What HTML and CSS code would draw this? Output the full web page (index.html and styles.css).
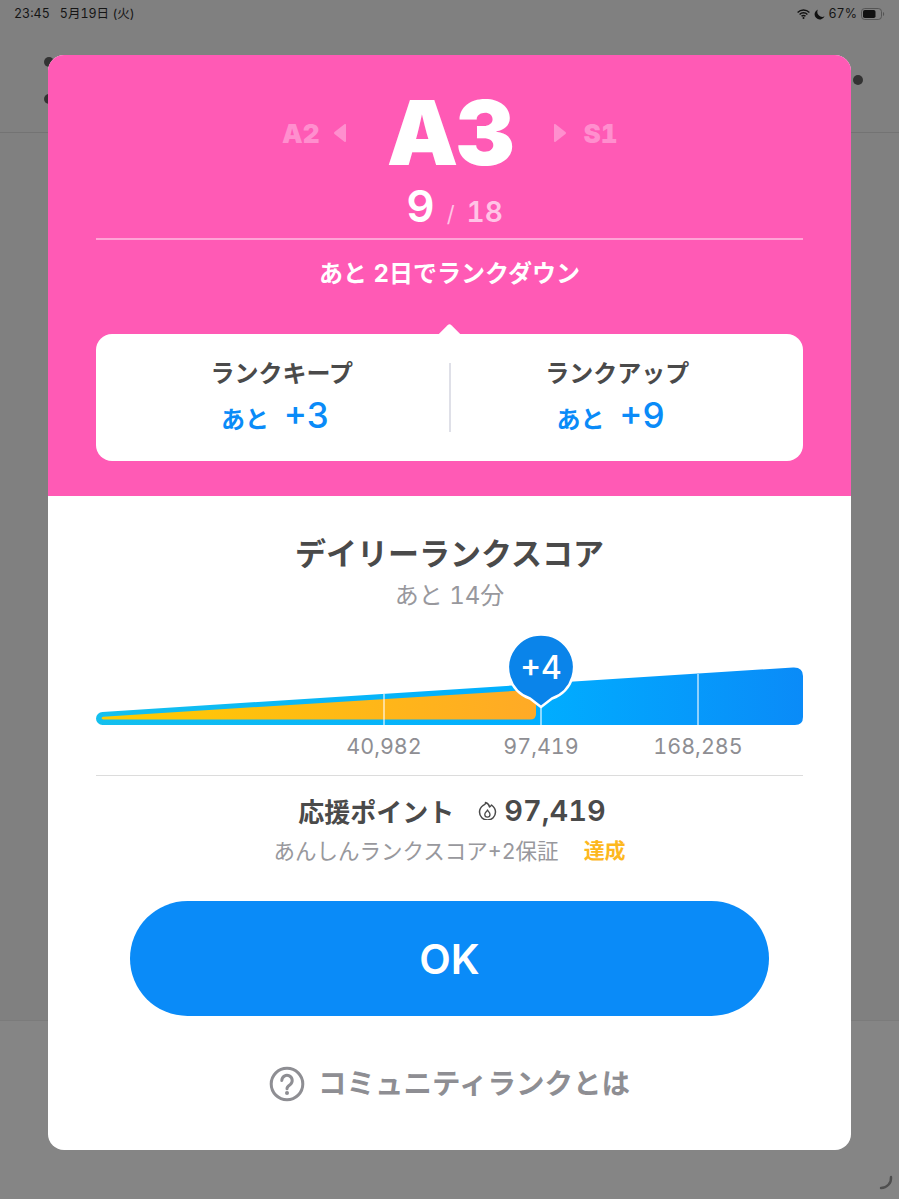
FILE: index.html
```html
<!DOCTYPE html>
<html lang="ja">
<head>
  <meta charset="UTF-8">
  <title>コミュニティランク</title>
  <link rel="stylesheet" href="styles.css">
</head>
<body>

<div id="statusBar">
  <div class="status-left"><span>23:45</span><span>5月19日 (火)</span></div>
  <div class="status-right">
    <svg width="13" height="10" viewBox="0 0 13 10">
      <path d="M0.6 3.4a8.4 8.4 0 0 1 11.8 0M2.6 5.4a5.5 5.5 0 0 1 7.8 0M4.5 7.3a2.8 2.8 0 0 1 4 0" fill="none" stroke="#111" stroke-width="1.4"/>
      <circle cx="6.5" cy="8.9" r="1" fill="#111"/>
    </svg>
    <svg width="11" height="11" viewBox="0 0 11 11">
      <path d="M4 0.4a5.2 5.2 0 1 0 6.6 6.9A5 5 0 0 1 4 0.4z" fill="#111"/>
    </svg>
    <span>67%</span>
    <svg width="24" height="12" viewBox="0 0 24 12">
      <rect x="0.5" y="0.5" width="20" height="11" rx="3.2" fill="none" stroke="#555"/>
      <rect x="2" y="2" width="12.5" height="8" rx="1.8" fill="#111"/>
      <path d="M22 4v4a2 2 0 0 0 1.2-2A2 2 0 0 0 22 4z" fill="#555"/>
    </svg>
  </div>
</div>

<div id="backHeader">
  <div class="back-dots"><i class="dot"></i><i class="dot"></i></div>
  <i class="dot"></i>
</div>
<div id="backFooter"></div>
<svg class="spinner" width="18" height="18" viewBox="0 0 18 18">
  <path d="M14 2a10 10 0 0 1-10 11" fill="none" stroke="#4f4f4f" stroke-width="2.4" stroke-linecap="round"/>
</svg>

<div id="modal">
  <section class="rank-top">
    <div class="rank-row">
      <div class="rank-side side-prev">
        <span>A2</span>
        <svg width="14" height="20" viewBox="0 0 14 20"><path d="M13 2v16a1 1 0 0 1-1.6.8L1.500 11a1.300 1.300 0 0 1 0-2l9.900-7.800A1 1 0 0 1 13 2z"/></svg>
      </div>
      <div class="rank-name">A3</div>
      <div class="rank-side side-next">
        <svg width="14" height="20" viewBox="0 0 14 20"><path d="M1 2v16a1 1 0 0 0 1.600.8L12.500 11a1.300 1.300 0 0 0 0-2L2.600 1.200A1 1 0 0 0 1 2z"/></svg>
        <span>S1</span>
      </div>
    </div>
    <div class="rank-count"><b>9</b><em>/</em><span>18</span></div>
    <div class="rank-notice">あと 2日でランクダウン</div>
    <div class="rank-card">
      <div class="rank-goal">
        <h3>ランクキープ</h3>
        <p>あと<b>+3</b></p>
      </div>
      <div class="rank-goal">
        <h3>ランクアップ</h3>
        <p>あと<b>+9</b></p>
      </div>
    </div>
  </section>

  <section class="score">
    <h2>デイリーランクスコア</h2>
    <p class="score-left">あと 14分</p>

    <div class="chart">
      <svg width="707" height="96" viewBox="0 0 707 96">
        <defs>
          <linearGradient id="blueBar" x1="0" x2="1" y1="0" y2="0">
            <stop offset="0" stop-color="#14c0ee"/>
            <stop offset="0.62" stop-color="#00aeff"/>
            <stop offset="1" stop-color="#0a8bf8"/>
          </linearGradient>
          <linearGradient id="orangeBar" x1="0" x2="1" y1="0" y2="0">
            <stop offset="0" stop-color="#ffcc00"/>
            <stop offset="1" stop-color="#ffaa26"/>
          </linearGradient>
        </defs>
        <path d="M6.500 78L697 33.500Q707 33 707 42V83Q707 91 699 91H6.500A6.500 6.500 0 0 1 6.500 78z" fill="url(#blueBar)"/>
        <path d="M7 82.700L430 56.200Q440 56 440 64V80Q440 85.500 434 85.500H7Q4 84 7 82.700z" fill="url(#orangeBar)"/>
        <path d="M288 60V91M445 52V91M602 40V91" stroke="#fff" stroke-opacity="0.55" stroke-width="2"/>
        <path d="M445 73L434 64.500A33 33 0 1 1 456 64.500z" fill="#0a84ea" stroke="#fff" stroke-width="2.500" stroke-linejoin="round"/>
        <text class="chart-pin" x="445" y="45" text-anchor="middle">+4</text>
      </svg>
      <div class="chart-labels">
        <span class="chart-label" style="left: 288px">40,982</span>
        <span class="chart-label" style="left: 445px">97,419</span>
        <span class="chart-label" style="left: 602px">168,285</span>
      </div>
    </div>

    <div class="points">
      <div class="points-main">
        <span>応援ポイント</span>
        <b>
          <svg width="19" height="19" viewBox="0 0 19 19">
            <path d="M7.500 1.500C8 3.500 6.500 4 5 4.500 3 6 1.500 8 1.500 11a8 8 0 0 0 16 0c0-3.500-2-5.500-4-7-.5 1-1 1.500-2 2-.3-2-1.800-3.800-4-4.500z" fill="none" stroke="#4a4a4a" stroke-width="1.500" stroke-linejoin="round"/>
            <path d="M9.500 9c.3 1.200 2.500 2.300 2.500 4.500a2.600 2.600 0 0 1-5.200 0c0-1.500.7-2 1.400-2.700.6-.5 1.100-1 1.300-1.800z" fill="none" stroke="#4a4a4a" stroke-width="1.300" stroke-linejoin="round"/>
          </svg>97,419
        </b>
      </div>
      <div class="points-sub"><span>あんしんランクスコア+2保証</span><b>達成</b></div>
    </div>

    <button class="ok-btn">OK</button>

    <div class="about">
      <svg width="36" height="36" viewBox="0 0 36 36">
        <circle cx="18" cy="18" r="15.800" fill="none" stroke="#8e8e93" stroke-width="3"/>
        <path d="M12.800 14.500a5.200 5.200 0 1 1 8.200 4.300c-1.800 1.200-3 2-3 4" fill="none" stroke="#8e8e93" stroke-width="3" stroke-linecap="round"/>
        <circle cx="18" cy="27" r="2" fill="#8e8e93"/>
      </svg>
      <span>コミュニティランクとは</span>
    </div>
  </section>
</div>

</body>
</html>
```

FILE: styles.css
```css
* {
  box-sizing: border-box;
}
html, body {
  height: 100%;
}
body {
  margin: 0;
  background: #808080;
  color: #4a4a4a;
  font-family: Inter, "Noto Sans CJK JP", sans-serif;
  font-variant-numeric: tabular-nums;
  overflow: hidden;
}

#statusBar {
  height: 28px;
  padding: 0 14px;
  display: flex;
  justify-content: space-between;
  align-items: center;
  font-size: 12.500px;
  line-height: 16px;
  color: #151515;
}
.status-left {
  display: flex;
  gap: 10px;
}
.status-right {
  display: flex;
  align-items: center;
  gap: 4px;
}

#backHeader {
  height: 105px;
  padding: 0 36px 0 44px;
  display: flex;
  justify-content: space-between;
  align-items: center;
  border-bottom: 1px solid #737373;
}
.back-dots {
  display: flex;
  flex-direction: column;
  gap: 27px;
}
.dot {
  display: block;
  width: 10px;
  height: 10px;
  border-radius: 50%;
  background: #333;
}
#backFooter {
  position: absolute;
  left: 0;
  right: 0;
  top: 1020px;
  bottom: 0;
  background: #858585;
  border-top: 1px solid #7b7b7b;
}
.spinner {
  position: absolute;
  right: 4px;
  bottom: 6px;
}

#modal {
  position: absolute;
  left: 48px;
  top: 55px;
  width: 803px;
  height: 1095px;
  border-radius: 16px;
  background: white;
  overflow: hidden;
}

.rank-top {
  height: 441px;
  padding: 32px 48px 0;
  background: #ff5ab5;
}
.rank-row {
  height: 92px;
  display: grid;
  grid-template-columns: 1fr 130px 1fr;
  align-items: center;
  column-gap: 38px;
}
.rank-name {
  text-align: center;
  font-family: Inter, sans-serif;
  font-weight: 900;
  font-size: 90px;
  line-height: 92px;
  letter-spacing: -2px;
  color: white;
}
.rank-side {
  display: flex;
  align-items: center;
  font-family: Inter, sans-serif;
  font-weight: 900;
  font-size: 26px;
  color: #ff8fce;
}
.rank-side svg {
  fill: #ff8fce;
}
.side-prev {
  justify-content: flex-end;
  gap: 13px;
}
.side-next {
  gap: 17px;
}
.rank-count {
  height: 61px;
  padding-left: 10px;
  display: flex;
  justify-content: center;
  align-items: baseline;
  gap: 12px;
  border-bottom: 2px solid rgba(255,255,255,0.45);
  color: #ffc4e6;
  font-size: 28px;
  font-weight: 600;
}
.rank-count b {
  font-size: 44px;
  line-height: 54px;
  font-weight: 600;
  color: white;
}
.rank-count em {
  font-size: 22px;
  font-style: normal;
  font-weight: 400;
}
.rank-notice {
  height: 94px;
  padding-top: 17px;
  text-align: center;
  font-size: 24px;
  line-height: 34px;
  font-weight: 700;
  color: white;
}

.rank-card {
  position: relative;
  height: 127px;
  padding: 0 19px;
  display: flex;
  align-items: center;
  border-radius: 16px;
  background: white;
}
.rank-card::before {
  content: "";
  position: absolute;
  left: 50%;
  top: -8px;
  width: 19px;
  height: 19px;
  margin-left: -9.500px;
  border-radius: 3px;
  background: white;
  transform: rotate(45deg) scale(0.9);
}
.rank-goal {
  flex: 1;
  height: 69px;
  text-align: center;
}
.rank-goal + .rank-goal {
  border-left: 2px solid #dfe0e8;
}
.rank-goal h3 {
  margin: 0;
  height: 32px;
  line-height: 22px;
  font-size: 24px;
  font-weight: 700;
  color: #4a4a4a;
}
.rank-goal p {
  margin: 0;
  padding-right: 13px;
  display: flex;
  justify-content: center;
  align-items: baseline;
  gap: 15px;
  font-size: 24px;
  line-height: 40px;
  font-weight: 700;
  color: #0a8bf8;
}
.rank-goal p b {
  font-size: 35px;
  font-weight: 500;
}

.score {
  padding: 37px 48px 0;
  text-align: center;
}
.score h2 {
  margin: 0;
  font-size: 31px;
  line-height: 42px;
  font-weight: 700;
  color: #4a4a4a;
}
.score-left {
  margin: 6px 0 0;
  font-size: 24px;
  line-height: 30px;
  color: #98989d;
}

.chart {
  margin-top: 23px;
  height: 142px;
  border-bottom: 1px solid #dcdcdc;
}
.chart svg {
  display: block;
}
.chart-pin {
  font-family: Inter, sans-serif;
  font-size: 32px;
  font-weight: 500;
  fill: white;
}
.chart-labels {
  position: relative;
  height: 30px;
  margin-top: 1px;
}
.chart-label {
  position: absolute;
  top: 0;
  transform: translateX(-50%);
  font-size: 21.500px;
  line-height: 30px;
  color: #8e8e93;
}

.points {
  padding-top: 15px;
}
.points-main {
  padding-left: 5px;
  display: flex;
  justify-content: center;
  align-items: center;
  gap: 24px;
  height: 38px;
  font-size: 26px;
  font-weight: 700;
}
.points-main b {
  display: flex;
  align-items: center;
  gap: 7px;
  font-size: 29px;
  font-weight: 600;
}
.points-sub {
  display: flex;
  justify-content: center;
  align-items: center;
  gap: 25px;
  height: 40px;
  font-size: 21.500px;
  color: #98989d;
}
.points-sub b {
  font-size: 21px;
  color: #fdb81e;
}

.ok-btn {
  display: block;
  width: 639px;
  height: 115px;
  margin: 32px auto 0;
  border: none;
  border-radius: 58px;
  background: #0a8bf8;
  color: white;
  font-family: inherit;
  font-size: 41px;
  font-weight: 600;
}

.about {
  margin-top: 47px;
  display: flex;
  justify-content: center;
  align-items: center;
  gap: 13px;
  font-size: 28.500px;
  line-height: 42px;
  font-weight: 700;
  color: #8e8e93;
}
```
